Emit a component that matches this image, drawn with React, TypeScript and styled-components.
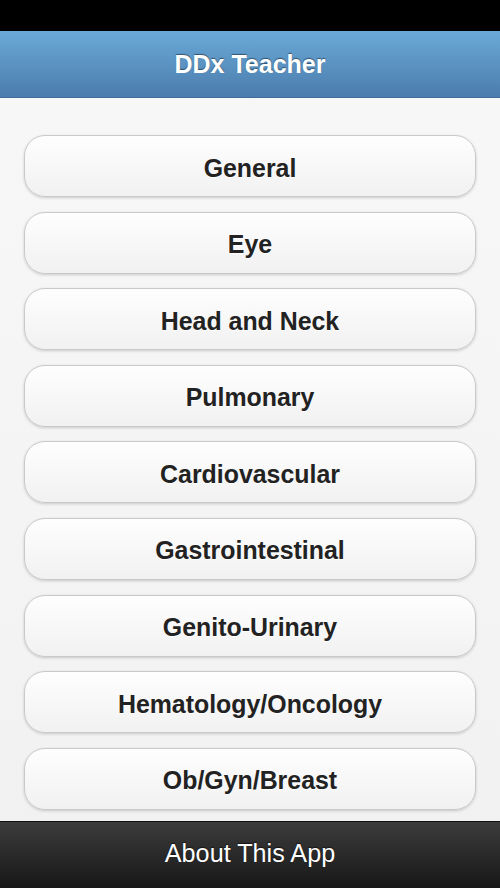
import React from 'react';
import styled, { createGlobalStyle } from 'styled-components';

const GlobalStyle = createGlobalStyle`
  html, body {
    margin: 0;
    padding: 0;
    background: #f6f6f6;
  }
  * {
    box-sizing: border-box;
  }
`;

const Screen = styled.div`
  width: 500px;
  height: 888px;
  display: flex;
  flex-direction: column;
  overflow: hidden;
  font-family: "Liberation Sans", Arial, Helvetica, sans-serif;
  background: linear-gradient(180deg, #f8f8f8 0%, #f1f1f1 100%);
`;

const StatusBar = styled.div`
  height: 31px;
  flex-shrink: 0;
  background: #000;
`;

const Header = styled.header`
  height: 67px;
  flex-shrink: 0;
  display: flex;
  align-items: center;
  justify-content: center;
  background: linear-gradient(180deg, #6aaad8 0%, #4b7cad 100%);
  border-bottom: 1px solid #3f6c98;
`;

const Title = styled.h1`
  margin: 0;
  font-size: 25px;
  font-weight: bold;
  color: #fff;
  text-shadow: 0 -1px 1px rgba(0, 0, 0, 0.45);
`;

const Content = styled.main`
  flex: 1;
  display: flex;
  flex-direction: column;
  gap: 14.6px;
  padding: 37px 24px 0 24px;
  overflow: hidden;
`;

const MenuButton = styled.button`
  height: 62px;
  flex-shrink: 0;
  width: 100%;
  display: flex;
  align-items: center;
  justify-content: center;
  padding: 4px 0 0 0;
  border: 1px solid #c9c9c9;
  border-radius: 21px;
  background: linear-gradient(180deg, #fefefe 0%, #f1f1f1 100%);
  box-shadow: 0 1px 3px rgba(0, 0, 0, 0.18);
  font-family: inherit;
  font-size: 24.9px;
  font-weight: bold;
  color: #222;
  text-shadow: 0 1px 0 #fff;
  cursor: pointer;
`;

const Footer = styled.footer`
  height: 67px;
  flex-shrink: 0;
  display: flex;
  align-items: center;
  justify-content: center;
  padding-bottom: 3px;
  background: linear-gradient(180deg, #3c3c3c 0%, #171717 100%);
  border-top: 1px solid #111;
`;

const FooterText = styled.span`
  font-size: 25.2px;
  color: #fff;
  text-shadow: 0 -1px 1px rgba(0, 0, 0, 0.6);
`;

const sections = [
  'General',
  'Eye',
  'Head and Neck',
  'Pulmonary',
  'Cardiovascular',
  'Gastrointestinal',
  'Genito-Urinary',
  'Hematology/Oncology',
  'Ob/Gyn/Breast',
];

export default function App() {
  return (
    <>
      <GlobalStyle />
      <Screen>
        <StatusBar />
        <Header>
          <Title>DDx Teacher</Title>
        </Header>
        <Content>
          {sections.map(name => (
            <MenuButton key={name}>{name}</MenuButton>
          ))}
        </Content>
        <Footer>
          <FooterText>About This App</FooterText>
        </Footer>
      </Screen>
    </>
  );
}
